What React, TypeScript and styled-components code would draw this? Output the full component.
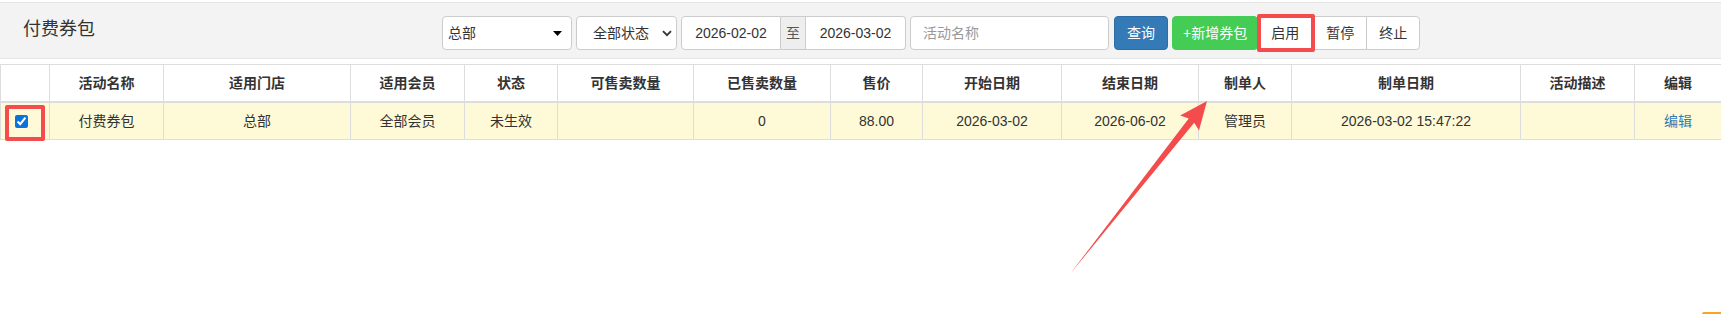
import * as React from "react";
import styled, { createGlobalStyle } from "styled-components";

const GlobalStyle = createGlobalStyle`
  html, body {
    margin: 0;
    padding: 0;
    background: #fff;
  }
  body {
    font-family: "Liberation Sans", "Noto Sans CJK SC", sans-serif;
    font-size: 14px;
    line-height: 20px;
    color: #333;
  }
`;

const Page = styled.div`
  position: relative;
  width: 1721px;
  height: 314px;
  padding-top: 2px;
  box-sizing: border-box;
  overflow: hidden;
`;

const TopBar = styled.div`
  display: flex;
  align-items: flex-start;
  height: 57px;
  box-sizing: border-box;
  padding-top: 13px;
  background: #f3f3f3;
  border-top: 1px solid #e4e4e4;
  border-bottom: 1px solid #e6e6e6;
`;

const Title = styled.div`
  flex: 0 0 442px;
  box-sizing: border-box;
  padding-left: 23px;
  font-size: 18px;
  line-height: 26px;
  color: #333;
`;

const Controls = styled.div`
  display: flex;
  align-items: center;
  gap: 4px;
`;

const Field = styled.div<{ $w: number; $pad?: string }>`
  display: flex;
  align-items: center;
  width: ${(p) => p.$w}px;
  height: 34px;
  box-sizing: border-box;
  padding: ${(p) => p.$pad || "0 12px"};
  background: #fff;
  border: 1px solid #ccc;
  border-radius: 4px;
  font-size: 14px;
  color: #333;
  white-space: nowrap;
`;

const SelectText = styled.span`
  flex: 1;
`;

const Placeholder = styled.span`
  color: #999;
`;

const InputGroup = styled.div`
  display: flex;
  height: 34px;
`;

const GroupInput = styled.div<{ $w: number; $pos: "left" | "right" }>`
  display: flex;
  align-items: center;
  justify-content: center;
  width: ${(p) => p.$w}px;
  box-sizing: border-box;
  background: #fff;
  border: 1px solid #ccc;
  border-radius: ${(p) => (p.$pos === "left" ? "4px 0 0 4px" : "0 4px 4px 0")};
  ${(p) => (p.$pos === "right" ? "border-left: none;" : "")}
`;

const Addon = styled.div`
  display: flex;
  align-items: center;
  justify-content: center;
  width: 25px;
  box-sizing: border-box;
  background: #eee;
  border: 1px solid #ccc;
  border-left: none;
  color: #555;
`;

const Button = styled.button<{ $kind: "primary" | "success" }>`
  height: 34px;
  padding: 6px ${(p) => (p.$kind === "success" ? "10px" : "12px")};
  font: inherit;
  line-height: 20px;
  border-radius: 4px;
  border: 1px solid ${(p) => (p.$kind === "primary" ? "#2e6da4" : "#44cc55")};
  background: ${(p) => (p.$kind === "primary" ? "#337ab7" : "#44cc55")};
  color: #fff;
  white-space: nowrap;
`;

const BtnGroup = styled.div`
  display: flex;
  margin-left: -4px;
`;

const GroupButton = styled.button<{ $first?: boolean; $last?: boolean; $marked?: boolean }>`
  position: relative;
  z-index: ${(p) => (p.$marked ? 2 : 0)};
  height: 34px;
  padding: 6px 12px;
  font: inherit;
  line-height: 20px;
  color: #333;
  background: #fff;
  border: 1px solid #ccc;
  margin-left: ${(p) => (p.$first ? "0" : "-1px")};
  border-radius: ${(p) => (p.$last ? "0 4px 4px 0" : "0")};
  white-space: nowrap;
  ${(p) =>
    p.$marked
      ? `margin-right: 2px;
  &::after {
    content: "";
    position: absolute;
    left: -2px;
    right: -4px;
    top: -3px;
    bottom: -3px;
    border: 4px solid #f44c4c;
    border-radius: 2px;
  }`
      : ""}
`;

const Table = styled.table`
  width: 1721px;
  margin-top: 5px;
  border-collapse: collapse;
  table-layout: fixed;
`;

const Th = styled.th`
  padding: 8px;
  font-weight: bold;
  text-align: center;
  border: 1px solid #ddd;
  border-bottom: 2px solid #ddd;
  white-space: nowrap;
`;

const Tr = styled.tr<{ $selected?: boolean }>`
  background: ${(p) => (p.$selected ? "#fefad8" : "#fff")};
`;

const Td = styled.td`
  position: relative;
  padding: 8px;
  height: 20px;
  text-align: center;
  vertical-align: middle;
  border: 1px solid #ddd;
  white-space: nowrap;
`;

const CheckCell = styled(Td)`
  text-align: left;
  padding: 0;
`;

const Check = styled.input`
  display: block;
  width: 13px;
  height: 13px;
  margin: 0 0 0 14px;
  accent-color: #0b72dc;
`;

const Marker = styled.div`
  position: absolute;
  left: 4px;
  top: 2px;
  width: 40px;
  height: 36px;
  box-sizing: border-box;
  border: 4px solid #f44c4c;
  border-radius: 2px;
`;

const Link = styled.a`
  color: #337ab7;
  text-decoration: none;
`;

const Overlay = styled.svg`
  position: absolute;
  left: 0;
  top: 0;
  pointer-events: none;
`;

const Corner = styled.div`
  position: absolute;
  right: 0;
  bottom: 0;
  width: 19px;
  height: 2px;
  border-radius: 3px 0 0 0;
  background: #f6a623;
`;

const cols = [49, 114, 187, 114, 93, 136, 137, 92, 139, 137, 93, 229, 114, 87];
const heads = [
  "",
  "活动名称",
  "适用门店",
  "适用会员",
  "状态",
  "可售卖数量",
  "已售卖数量",
  "售价",
  "开始日期",
  "结束日期",
  "制单人",
  "制单日期",
  "活动描述",
  "编辑",
];
const row = [
  "付费券包",
  "总部",
  "全部会员",
  "未生效",
  "",
  "0",
  "88.00",
  "2026-03-02",
  "2026-06-02",
  "管理员",
  "2026-03-02 15:47:22",
  "",
];

const Triangle = () => (
  <svg width="9" height="5" viewBox="0 0 9 5">
    <path d="M0 0h9L4.5 5z" fill="#000" />
  </svg>
);

const Chevron = () => (
  <svg width="10" height="7" viewBox="0 0 10 7">
    <path d="M1 1.2l4 4 4-4" fill="none" stroke="#333" strokeWidth="1.8" />
  </svg>
);

export default function App() {
  return (
    <Page>
      <GlobalStyle />
      <TopBar>
        <Title>付费券包</Title>
        <Controls>
          <Field $w={130} $pad="0 9px 0 5px">
            <SelectText>总部</SelectText>
            <Triangle />
          </Field>
          <Field $w={101} $pad="0 4px 0 16px">
            <SelectText>全部状态</SelectText>
            <Chevron />
          </Field>
          <InputGroup>
            <GroupInput $w={100} $pos="left">2026-02-02</GroupInput>
            <Addon>至</Addon>
            <GroupInput $w={100} $pos="right">2026-03-02</GroupInput>
          </InputGroup>
          <Field $w={199}>
            <Placeholder>活动名称</Placeholder>
          </Field>
          <Button $kind="primary" style={{ marginLeft: 1 }}>查询</Button>
          <Button $kind="success">+新增券包</Button>
          <BtnGroup>
            <GroupButton $first $marked>启用</GroupButton>
            <GroupButton>暂停</GroupButton>
            <GroupButton $last>终止</GroupButton>
          </BtnGroup>
        </Controls>
      </TopBar>
      <Table>
        <colgroup>
          {cols.map((w, i) => (
            <col key={i} style={{ width: w }} />
          ))}
        </colgroup>
        <thead>
          <tr>
            {heads.map((h, i) => (
              <Th key={i}>{h}</Th>
            ))}
          </tr>
        </thead>
        <tbody>
          <Tr $selected>
            <CheckCell>
              <Check type="checkbox" defaultChecked />
              <Marker />
            </CheckCell>
            {row.map((c, i) => (
              <Td key={i}>{c}</Td>
            ))}
            <Td>
              <Link href="#">编辑</Link>
            </Td>
          </Tr>
        </tbody>
      </Table>
      <Overlay width="1721" height="314" viewBox="0 0 1721 314">
        <polygon
          points="1070,274 1194.2,122.8 1199,130.5 1207,101 1180.2,115.5 1188.7,118.4"
          fill="#f44c4c"
        />
      </Overlay>
      <Corner />
    </Page>
  );
}
